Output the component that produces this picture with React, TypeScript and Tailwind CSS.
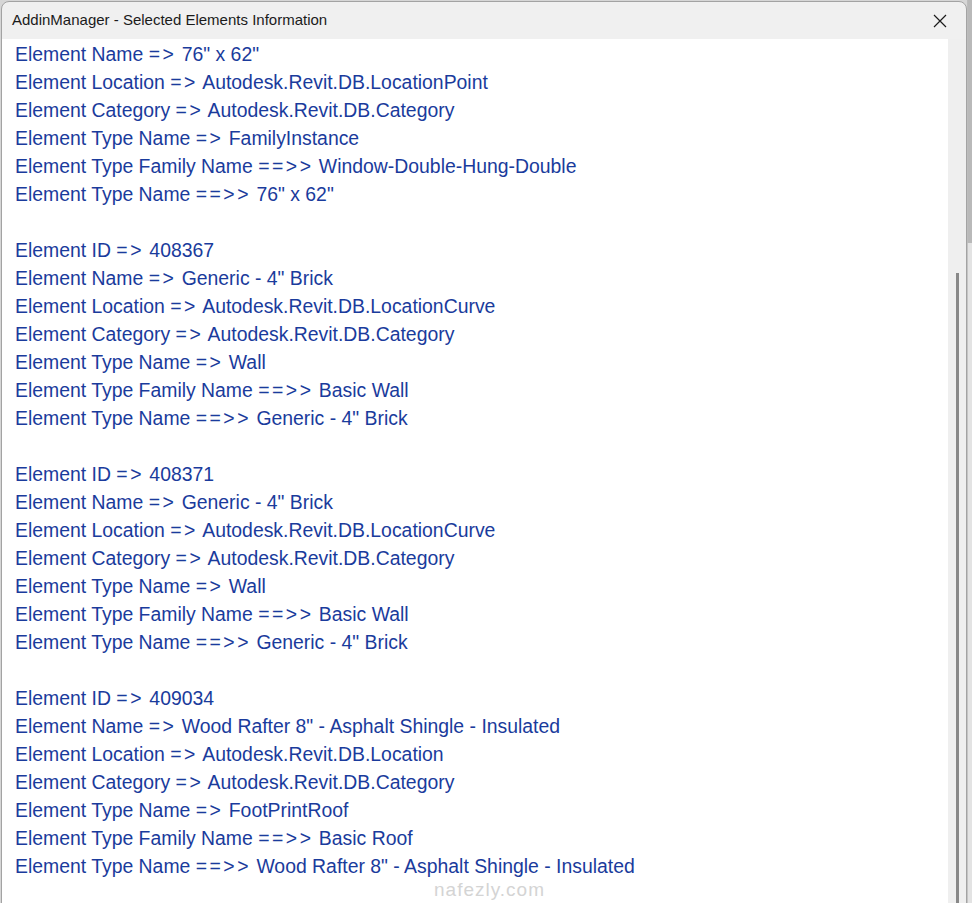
import React from "react";

const blocks: string[][] = [
  [
    'Element Name => 76" x 62"',
    "Element Location => Autodesk.Revit.DB.LocationPoint",
    "Element Category => Autodesk.Revit.DB.Category",
    "Element Type Name => FamilyInstance",
    "Element Type Family Name ==>> Window-Double-Hung-Double",
    'Element Type Name ==>> 76" x 62"',
  ],
  [
    "Element ID => 408367",
    'Element Name => Generic - 4" Brick',
    "Element Location => Autodesk.Revit.DB.LocationCurve",
    "Element Category => Autodesk.Revit.DB.Category",
    "Element Type Name => Wall",
    "Element Type Family Name ==>> Basic Wall",
    'Element Type Name ==>> Generic - 4" Brick',
  ],
  [
    "Element ID => 408371",
    'Element Name => Generic - 4" Brick',
    "Element Location => Autodesk.Revit.DB.LocationCurve",
    "Element Category => Autodesk.Revit.DB.Category",
    "Element Type Name => Wall",
    "Element Type Family Name ==>> Basic Wall",
    'Element Type Name ==>> Generic - 4" Brick',
  ],
  [
    "Element ID => 409034",
    'Element Name => Wood Rafter 8" - Asphalt Shingle - Insulated',
    "Element Location => Autodesk.Revit.DB.Location",
    "Element Category => Autodesk.Revit.DB.Category",
    "Element Type Name => FootPrintRoof",
    "Element Type Family Name ==>> Basic Roof",
    'Element Type Name ==>> Wood Rafter 8" - Asphalt Shingle - Insulated',
  ],
];

function Line({ text }: { text: string }) {
  const m = text.match(/^(.*?)(==>>|=>)(.*)$/);
  if (!m) return <div className="whitespace-pre">{text}</div>;
  return (
    <div className="whitespace-pre">
      {m[1]}
      <span className="tracking-[2.5px]">{m[2]}</span>
      {m[3]}
    </div>
  );
}

export default function App() {
  return (
    <div
      className="relative w-[972px] h-[903px] overflow-hidden bg-[#d6d6d6] flex"
      style={{ fontFamily: '"Liberation Sans", Arial, sans-serif' }}
    >
      <div className="mt-[1px] ml-[1px] w-[966px] h-[920px] flex flex-col border border-[#a3a3a3] rounded-t-[8px] bg-[#f0f0f0] overflow-hidden">
        <div className="h-[37px] shrink-0 flex items-center justify-between pl-[10px] pr-[16px]">
          <span className="text-[15px] text-[#1b1b1b]">AddinManager - Selected Elements Information</span>
          <svg width="14" height="14" viewBox="0 0 14 14" className="mr-[3px]">
            <path d="M1 1 L13 13 M13 1 L1 13" stroke="#1b1b1b" strokeWidth="1.2" />
          </svg>
        </div>
        <div className="flex flex-1">
          <div className="w-[946px] bg-white pl-[13px] pt-[1px] text-[19.4px] leading-[28px] text-[#1a3b9c]">
            {blocks.map((b, i) => (
              <div key={i} className="mb-[28px]">
                {b.map((l, j) => (
                  <Line key={j} text={l} />
                ))}
              </div>
            ))}
          </div>
          <div className="flex-1 bg-[#efefef] pl-[8px]">
            <div className="mt-[234px] w-[3px] h-[700px] bg-[#888888]" />
          </div>
        </div>
      </div>
      <div className="flex-1 flex flex-col">
        <div className="h-[243px] border-l border-[#bdbdbd] bg-[#b9b9b9]" />
        <div className="flex-1 border-l border-[#c4c4c4] bg-[#e3e3e3]" />
      </div>
      <div className="absolute left-[434px] top-[879px] text-[19px] leading-[22px] tracking-[1px] text-[#d4d4d4]">
        nafezly.com
      </div>
    </div>
  );
}
